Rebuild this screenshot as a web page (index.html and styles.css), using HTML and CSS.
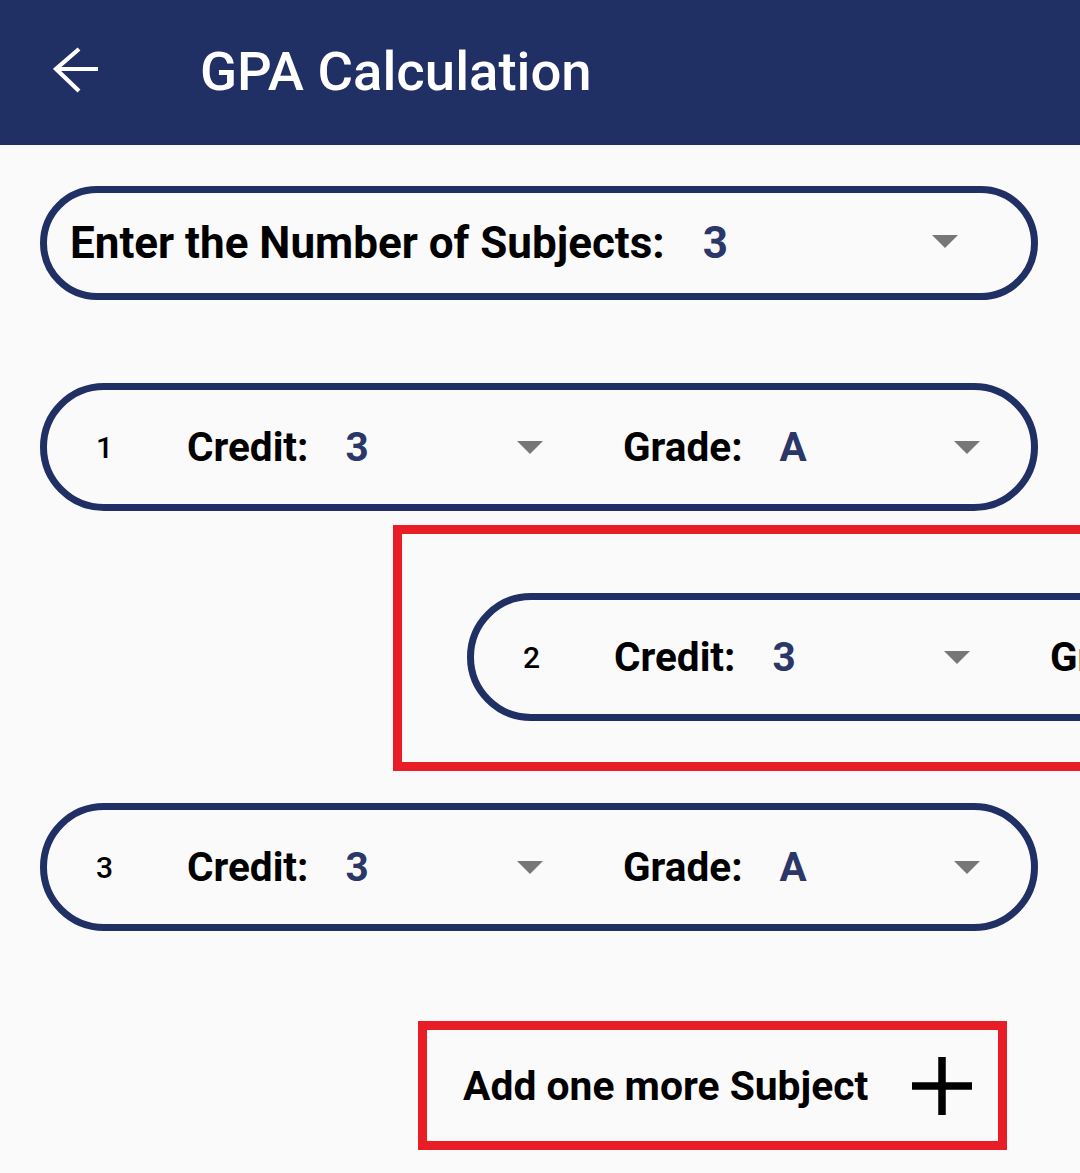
FILE: index.html
```html
<!DOCTYPE html>
<html lang="en">
<head>
<meta charset="utf-8">
<title>GPA Calculation</title>
<link rel="stylesheet" href="styles.css">
</head>
<body>
<header class="app-bar">
  <svg class="back-icon" viewBox="0 0 46 46" width="46" height="46" aria-hidden="true">
    <path d="M3 22 H45 M26 2 L3 22 L26 44" fill="none" stroke="#fff" stroke-width="4.2" stroke-linejoin="miter"/>
  </svg>
  <h1 class="app-title">GPA Calculation</h1>
</header>

<main class="content">
  <div class="pill pill-count">
    <span class="label">Enter the Number of Subjects:</span>
    <span class="value">3</span>
    <span class="caret caret-count"></span>
  </div>

  <div class="pill subject-row row-first">
    <span class="num">1</span>
    <div class="field field-credit">
      <span class="label">Credit:</span>
      <span class="value">3</span>
      <span class="caret"></span>
    </div>
    <div class="field field-grade">
      <span class="label">Grade:</span>
      <span class="value">A</span>
      <span class="caret"></span>
    </div>
  </div>

  <div class="highlight highlight-row">
    <div class="pill subject-row">
      <span class="num">2</span>
      <div class="field field-credit">
        <span class="label">Credit:</span>
        <span class="value">3</span>
        <span class="caret"></span>
      </div>
      <div class="field field-grade">
        <span class="label">Grade:</span>
        <span class="value">A</span>
        <span class="caret"></span>
      </div>
    </div>
  </div>

  <div class="pill subject-row row-third">
    <span class="num">3</span>
    <div class="field field-credit">
      <span class="label">Credit:</span>
      <span class="value">3</span>
      <span class="caret"></span>
    </div>
    <div class="field field-grade">
      <span class="label">Grade:</span>
      <span class="value">A</span>
      <span class="caret"></span>
    </div>
  </div>

  <div class="highlight highlight-add">
    <span class="add-text">Add one more Subject</span>
    <svg class="plus-icon" viewBox="0 0 60 58" width="60" height="58" aria-hidden="true">
      <path d="M30 0 V58 M0 29 H60" fill="none" stroke="#000" stroke-width="7.5"/>
    </svg>
  </div>
</main>
</body>
</html>
```

FILE: styles.css
```css
html, body {
  margin: 0;
  padding: 0;
}

body {
  width: 1080px;
  height: 1173px;
  overflow: hidden;
  background: #fafafa;
  font-family: Roboto, "Noto Sans", "Liberation Sans", sans-serif;
  color: #000;
}

.app-bar {
  height: 145px;
  background: #213064;
  display: flex;
  align-items: center;
  padding-left: 53px;
  box-sizing: border-box;
}

.back-icon {
  display: block;
  margin-top: -6px;
}

.app-title {
  margin: -4px 0 0 101px;
  font-size: 54.5px;
  font-weight: 500;
  color: #fff;
}

.content {
  display: flex;
  flex-direction: column;
  align-items: flex-start;
}

.pill {
  box-sizing: border-box;
  width: 998px;
  border: 7px solid #213064;
  border-radius: 70px;
  display: flex;
  align-items: center;
  flex-shrink: 0;
  background: #fafafa;
}

.label {
  font-weight: 700;
  white-space: nowrap;
}

.value {
  font-weight: 700;
  color: #2a3768;
}

.caret {
  width: 0;
  height: 0;
  border-left: 13px solid transparent;
  border-right: 13px solid transparent;
  border-top: 13px solid #777;
  flex-shrink: 0;
}

/* Number of subjects */
.pill-count {
  margin: 41px 0 0 40px;
  height: 114px;
  padding-left: 23px;
  font-size: 44px;
}

.pill-count .value {
  margin-left: 38px;
}

.caret-count {
  margin-left: auto;
  margin-right: 73px;
  margin-top: -4px;
}

/* Subject rows */
.subject-row {
  height: 128px;
  padding: 0 51px 0 49px;
  font-size: 40.5px;
}

.row-first {
  margin: 83px 0 0 40px;
}

.row-third {
  margin: 32px 0 0 40px;
}

.num {
  width: 91px;
  font-size: 30px;
  font-weight: 500;
  flex-shrink: 0;
}

.field {
  display: flex;
  align-items: center;
  flex-shrink: 0;
}

.field .value {
  margin-left: 37px;
}

.field .caret {
  margin-left: auto;
}

.field-credit {
  width: 436px;
}

.field-credit .caret {
  margin-right: 80px;
}

.field-grade {
  flex: 1;
}

/* Highlight boxes */
.highlight {
  box-sizing: border-box;
  border: 9px solid #e81d25;
  flex-shrink: 0;
}

.highlight-row {
  margin: 14px 0 0 393px;
  padding: 59px 0 41px 65px;
  width: 1500px;
}

.highlight-add {
  margin: 90px 0 0 418px;
  width: 589px;
  height: 129px;
  display: flex;
  align-items: center;
  padding-left: 36px;
}

.add-text {
  font-size: 40.8px;
  font-weight: 700;
  white-space: nowrap;
}

.plus-icon {
  display: block;
  margin-left: auto;
  margin-right: 26px;
  filter: blur(0.7px);
}
```
